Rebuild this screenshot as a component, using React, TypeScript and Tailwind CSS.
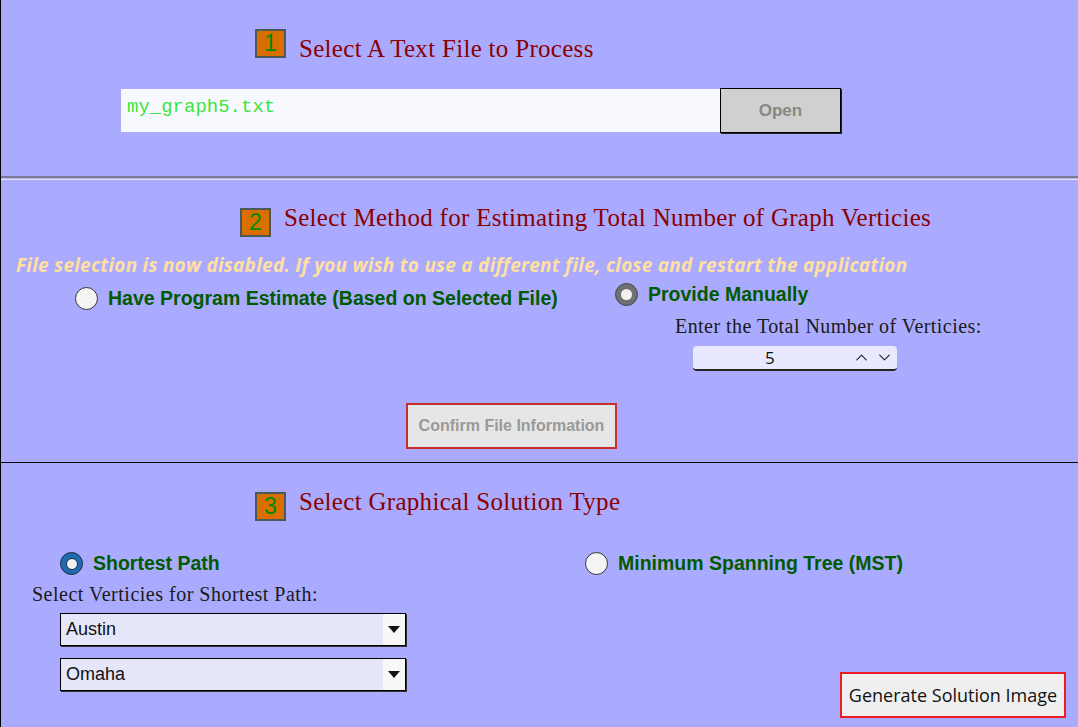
import { ChevronDown, ChevronUp } from "lucide-react";

const serif = "font-['Liberation_Serif',serif]";
const arial = "font-['Liberation_Sans',Arial,sans-serif]";

function Badge({ n }: { n: string }) {
  return (
    <span
      className={`flex h-[29px] w-[31px] shrink-0 items-center justify-center border-2 border-[#4a5a5a] bg-[#d96f00] text-[23px] leading-none text-[#008a00] ${arial}`}
    >
      {n}
    </span>
  );
}

function Heading({ n, text, className, textClass }: { n: string; text: string; className: string; textClass: string }) {
  return (
    <div className={`flex items-start gap-[13px] ${className}`}>
      <Badge n={n} />
      <h2 className={`text-[25px] leading-none tracking-[0.3px] text-[#8b0000] ${serif} ${textClass}`}>{text}</h2>
    </div>
  );
}

function Radio({ kind }: { kind: "off" | "gray" | "blue" }) {
  if (kind === "off")
    return <span className="block h-[23px] w-[23px] shrink-0 rounded-full border-[1.5px] border-[#333] bg-[#f4f4f4]" />;
  if (kind === "gray")
    return (
      <span className="flex h-[23px] w-[23px] shrink-0 items-center justify-center rounded-full border border-[#444] bg-[#707070]">
        <span className="block h-[11px] w-[11px] rounded-full bg-[#f2f2f2]" />
      </span>
    );
  return (
    <span className="flex h-[23px] w-[23px] shrink-0 items-center justify-center rounded-full border border-[#1a2a44] bg-[#1f6bb0]">
      <span className="block h-[12px] w-[12px] rounded-full border border-[#1a2a44] bg-[#f4f4f4]" />
    </span>
  );
}

function Label({ text }: { text: string }) {
  return <span className={`text-[19.5px] font-bold leading-none text-[#005a00] ${arial}`}>{text}</span>;
}

function Dropdown({ value }: { value: string }) {
  return (
    <div className="flex h-[33px] w-[346px] border border-black bg-[#e6e6fa] shadow-[1px_1px_0_#333]">
      <span className={`flex flex-1 items-center pl-[5px] text-[18px] text-[#111] ${arial}`}>{value}</span>
      <span className="flex w-[22px] items-center justify-center bg-[#f8f8f8]">
        <svg width="12" height="7" viewBox="0 0 12 7">
          <path d="M0 0h12L6 7z" fill="#111" />
        </svg>
      </span>
    </div>
  );
}

export default function App() {
  return (
    <div className="h-[727px] w-[1078px] overflow-hidden border-l border-black bg-[#aaaaff]">
      {/* section 1 */}
      <section className="h-[176px] pt-[29px]">
        <Heading n="1" text="Select A Text File to Process" className="ml-[254px]" textClass="mt-[7px]" />
        <div className="ml-[120px] mt-[27px] flex items-center">
          <div className="h-[43px] w-[599px] bg-[#f8f8ff] pl-[6px] pt-[5px]">
            <span className="font-['Liberation_Mono',monospace] text-[19px] leading-none text-[#3ae63a]">my_graph5.txt</span>
          </div>
          <button
            type="button"
            className={`h-[45px] w-[121px] border border-black bg-[#d0d0d0] text-[17px] font-bold text-[#888] shadow-[1px_1px_0_#222] ${arial}`}
          >
            Open
          </button>
        </div>
      </section>

      <div className="h-[4px] border-t-2 border-b border-t-[#7a7a9a] border-b-[#e4e4ff] bg-[#b4b4e8]" />

      {/* section 2 */}
      <section className="h-[283px] border-b border-black pt-[28px]">
        <Heading
          n="2"
          text="Select Method for Estimating Total Number of Graph Verticies"
          className="ml-[239px]"
          textClass="-mt-[3px]"
        />
        <p className="ml-[15px] mt-[19px] font-['Open_Sans',sans-serif] text-[19px] font-bold italic leading-none tracking-[0.25px] text-[#ffe0a0]">
          File selection is now disabled. If you wish to use a different file, close and restart the application
        </p>
        <div className="flex items-start">
          <div className="ml-[74px] mt-[12px] flex w-[540px] items-center gap-[10px]">
            <Radio kind="off" />
            <Label text="Have Program Estimate (Based on Selected File)" />
          </div>
          <div className="mt-[8px] flex flex-col">
            <div className="flex items-center gap-[10px]">
              <Radio kind="gray" />
              <Label text="Provide Manually" />
            </div>
            <span className={`ml-[60px] mt-[10px] text-[20px] leading-none tracking-[0.45px] text-[#1a1a1a] ${serif}`}>
              Enter the Total Number of Verticies:
            </span>
            <div className="ml-[78px] mt-[10px] flex h-[25px] w-[204px] items-center rounded-[4px] border-b-2 border-b-[#222] bg-[#e8e8ff]">
              <span className="flex-1 pl-[72px] font-['Open_Sans',sans-serif] text-[17px] leading-none text-[#111]">5</span>
              <ChevronUp size={19} strokeWidth={1.4} className="mr-[4px] text-[#222]" />
              <ChevronDown size={19} strokeWidth={1.4} className="mr-[3px] text-[#222]" />
            </div>
          </div>
        </div>
        <div className="flex justify-center">
          <button
            type="button"
            className={`ml-[-56px] mt-[32px] h-[46px] w-[211px] border-2 border-[#c83030] bg-[#e6e6e6] text-[16px] font-bold text-[#999] ${arial}`}
          >
            Confirm File Information
          </button>
        </div>
      </section>

      {/* section 3 */}
      <section className="flex h-[263px] flex-col pt-[29px]">
        <Heading n="3" text="Select Graphical Solution Type" className="ml-[254px]" textClass="-mt-[3px]" />
        <div className="mt-[31px] flex flex-1 pb-[8px]">
          <div className="flex w-[584px] flex-col">
            <div className="ml-[59px] flex items-center gap-[10px]">
              <Radio kind="blue" />
              <Label text="Shortest Path" />
            </div>
            <span className={`ml-[31px] mt-[9px] text-[20px] leading-none tracking-[0.5px] text-[#1a1a1a] ${serif}`}>
              Select Verticies for Shortest Path:
            </span>
            <div className="ml-[59px] mt-[9px] flex flex-col gap-[12px]">
              <Dropdown value="Austin" />
              <Dropdown value="Omaha" />
            </div>
          </div>
          <div className="flex flex-1 flex-col">
            <div className="flex items-center gap-[10px]">
              <Radio kind="off" />
              <Label text="Minimum Spanning Tree (MST)" />
            </div>
            <div className="mt-auto flex justify-end pr-[12px]">
              <button
                type="button"
                className="h-[46px] w-[226px] border-2 border-[#ee1c24] bg-[#efefef] font-['Open_Sans',sans-serif] text-[18px] text-[#111]"
              >
                Generate Solution Image
              </button>
            </div>
          </div>
        </div>
      </section>
    </div>
  );
}
